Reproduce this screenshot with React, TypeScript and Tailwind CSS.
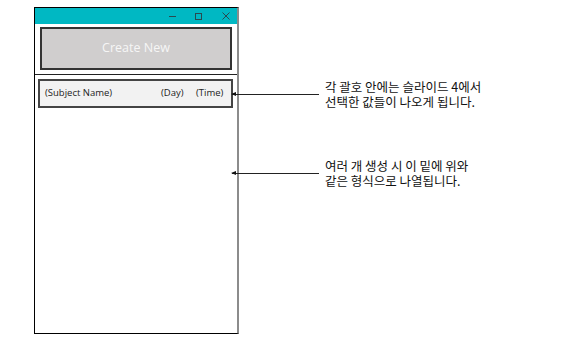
import React from "react";

function Callout({ top, lines }: { top: number; lines: [string, string] }) {
  return (
    <div className="absolute left-0 flex items-center" style={{ top }}>
      <div className="relative h-px w-[87px] bg-[#222]">
        <div className="absolute left-[-1px] top-[-2px] h-0 w-0 border-y-[2.5px] border-r-[5px] border-y-transparent border-r-[#111]" />
      </div>
      <p className="ml-[6px] text-[12.5px] leading-[15px] text-[#111] [font-family:'Noto_Sans_CJK_KR','Noto_Sans',sans-serif]">
        {lines[0]}
        <br />
        {lines[1]}
      </p>
    </div>
  );
}

export default function App() {
  return (
    <div className="relative h-[345px] w-[577px] overflow-hidden bg-white">
      <div className="flex pl-[34px] pt-[7px]">
        {/* app window */}
        <div className="flex h-[327px] w-[205px] flex-col border-y border-l border-r-2 border-black border-r-[#8c8c8c] bg-white">
          <div className="flex h-[16px] shrink-0 items-center justify-end bg-[#00b8c3] pr-[7px]">
            <div className="mr-[19px] h-px w-[7px] bg-[#2a4a50]" />
            <div className="mr-[20px] h-[7px] w-[7px] border border-[#2a4a50]" />
            <svg width="8" height="8" viewBox="0 0 8 8">
              <path d="M0.5 0.5L7.5 7.5M7.5 0.5L0.5 7.5" stroke="#2a4a50" strokeWidth="1" />
            </svg>
          </div>
          <div className="px-[5px] pt-[3px]">
            <button className="flex h-[43px] w-[192px] items-center justify-center border-2 border-[#333] bg-[#d0cece] text-[12.5px] text-[#f6f6f6] [font-family:'Open_Sans',sans-serif]">
              Create New
            </button>
          </div>
          <div className="mt-[4px] h-px w-full bg-[#222]" />
          <div className="px-[3px] pt-[4px]">
            <div className="flex h-[29px] w-[195px] items-center border-2 border-[#444] bg-[#f2f2f2] pl-[5px] text-[9.5px] text-[#222] [font-family:'Open_Sans',sans-serif]">
              <span className="w-[116px]">(Subject Name)</span>
              <span className="w-[35px]">(Day)</span>
              <span>(Time)</span>
            </div>
          </div>
        </div>
      </div>
      {/* annotations */}
      <div className="absolute left-[232px] top-0 h-full w-[345px]">
        <Callout top={79} lines={["각 괄호 안에는 슬라이드 4에서", "선택한 값들이 나오게 됩니다."]} />
        <Callout top={158} lines={["여러 개 생성 시 이 밑에 위와", "같은 형식으로 나열됩니다."]} />
      </div>
    </div>
  );
}
